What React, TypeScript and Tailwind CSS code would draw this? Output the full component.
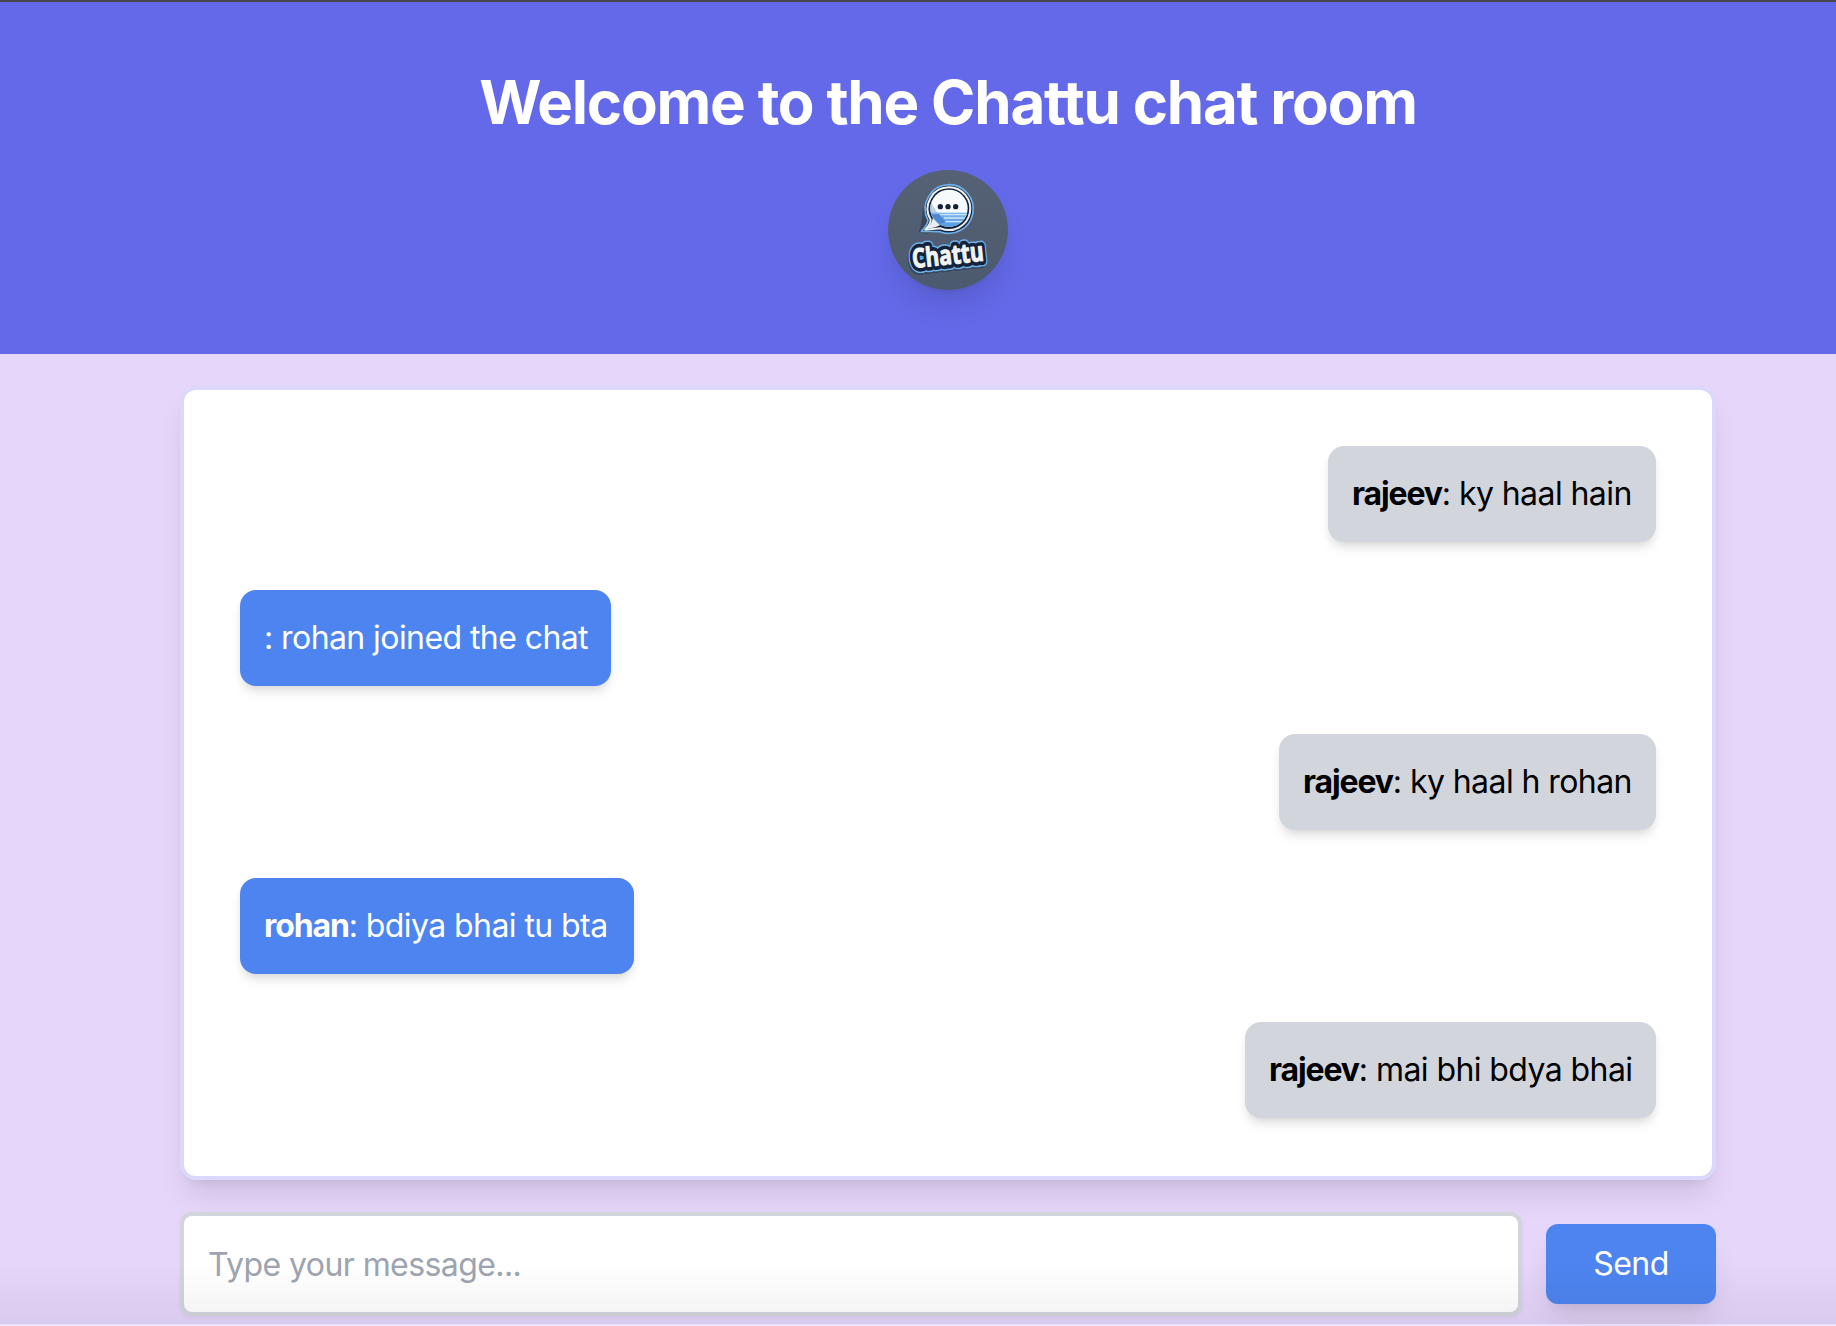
import React from "react";

type Message = { id: number; user: string; text: string; side: "left" | "right"; width: string };

const messages: Message[] = [
  { id: 1, user: "rajeev", text: "ky haal hain", side: "right", width: "w-[328px]" },
  { id: 2, user: "", text: "rohan joined the chat", side: "left", width: "w-[371px]" },
  { id: 3, user: "rajeev", text: "ky haal h rohan", side: "right", width: "w-[377px]" },
  { id: 4, user: "rohan", text: "bdiya bhai tu bta", side: "left", width: "w-[394px]" },
  { id: 5, user: "rajeev", text: "mai bhi bdya bhai", side: "right", width: "w-[411px]" },
];

function Logo() {
  const word = {
    x: 131,
    y: 343,
    fontSize: 80,
    fontWeight: 700,
    fontFamily: "Open Sans, Noto Sans, sans-serif",
    textLength: 216,
    lengthAdjust: "spacingAndGlyphs" as const,
    strokeLinejoin: "round" as const,
  };
  return (
    <svg viewBox="60 60 360 360" className="size-[120px] rounded-full shadow-[0_20px_30px_-6px_rgba(0,0,0,0.1),0_8px_12px_-8px_rgba(0,0,0,0.1)]">
      <defs>
        <linearGradient id="slate" x1="0" y1="0" x2="0" y2="1">
          <stop offset="0" stopColor="#566175" />
          <stop offset="1" stopColor="#4c5a6f" />
        </linearGradient>
        <linearGradient id="sea" x1="0" y1="0" x2="0" y2="1">
          <stop offset="0" stopColor="#7db7f0" />
          <stop offset="1" stopColor="#4f97e0" />
        </linearGradient>
        <clipPath id="disc">
          <circle cx="243" cy="175" r="56" />
        </clipPath>
      </defs>
      <rect x="60" y="60" width="360" height="360" fill="url(#slate)" />
      <path d="M165 170 Q162 225 152 245 Q175 255 200 246 L215 240 Z" fill="#38455b" />
      <g strokeLinejoin="round">
        <path d="M243 104 a73 73 0 1 1 -27 141 Q190 244 160 244 Q178 226 180 211 A73 73 0 0 1 243 104 Z" fill="#14233a" stroke="#6fb0e8" strokeWidth="5" />
        <path d="M243 112 a64 64 0 1 1 -25 123 Q195 238 172 239 Q188 222 188 209 A64 64 0 0 1 243 112 Z" fill="#14233a" stroke="#eef1f2" strokeWidth="6" />
      </g>
      <circle cx="243" cy="175" r="56" fill="#f7fafa" />
      <g clipPath="url(#disc)">
        <path d="M184 150 L218 205 L184 230 Z" fill="#b9cfea" />
        <rect x="188" y="188" width="115" height="48" fill="url(#sea)" />
        <path d="M216 194 H300 M228 204 H300 M232 215 H300" stroke="#cfe5fa" strokeWidth="4" />
        <path d="M188 193 H213 L233 217 L212 222 Z" fill="#4c88cf" />
      </g>
      <path d="M176 236 Q192 222 194 205 L216 226 Q200 235 176 236 Z" fill="#e8eef3" />
      <g fill="#14233a">
        <circle cx="217" cy="170" r="8" />
        <circle cx="240" cy="170" r="8" />
        <circle cx="263" cy="170" r="8" />
      </g>
      <g transform="rotate(-6 240 310)">
        <text {...word} x={127} y={349} fill="#38455b" stroke="#38455b" strokeWidth="32">Chattu</text>
        <text {...word} fill="#6fb0e8" stroke="#6fb0e8" strokeWidth="34">Chattu</text>
        <text {...word} fill="#14233a" stroke="#14233a" strokeWidth="25">Chattu</text>
        <text {...word} fill="#f2f4f4" stroke="#f2f4f4" strokeWidth="3">Chattu</text>
      </g>
    </svg>
  );
}

function Bubble({ message }: { message: Message }) {
  const right = message.side === "right";
  return (
    <div className={right ? "flex justify-end" : "flex justify-start"}>
      <div
        className={`${message.width} h-24 rounded-2xl px-6 py-6 text-[32px] leading-[48px] whitespace-nowrap shadow-[0_8px_12px_-2px_rgba(0,0,0,0.1),0_4px_8px_-4px_rgba(0,0,0,0.1)] ${
          right ? "bg-[#d2d5dc] text-black" : "bg-[#4d84ef] text-white"
        }`}
      >
        <strong className="font-bold tracking-[-0.035em]">{message.user}</strong>
        <span className="tracking-[-0.018em]">: {message.text}</span>
      </div>
    </div>
  );
}

export default function App() {
  return (
    <div className="relative h-[1326px] w-[1836px] overflow-hidden bg-[#e5d6fa] font-['Inter',sans-serif]">
      <div className="w-[1896px]">
        <header className="flex h-[354px] flex-col items-center border-t-2 border-[#48484a] bg-[#6369e8] pt-16">
          <h1 className="text-[60px] leading-[72px] font-bold tracking-[-0.02em] whitespace-nowrap text-white">
            Welcome to the Chattu chat room
          </h1>
          <div className="mt-8">
            <Logo />
          </div>
        </header>
        <main className="mx-auto w-[1536px] pt-8">
          <section className="flex h-[794px] flex-col gap-12 rounded-2xl border-4 border-[#dcd8fb] bg-white p-14 shadow-[0_20px_30px_-6px_rgba(0,0,0,0.1),0_8px_12px_-8px_rgba(0,0,0,0.1)]">
            {messages.map((m) => (
              <Bubble key={m.id} message={m} />
            ))}
          </section>
          <form className="mt-8 flex items-center gap-6" onSubmit={(e) => e.preventDefault()}>
            <input
              type="text"
              placeholder="Type your message..."
              className="h-[104px] w-[1342px] rounded-xl border-4 border-[#d2d5dc] bg-white px-6 text-[32px] tracking-[-0.018em] text-black shadow-[0_2px_4px_rgba(0,0,0,0.05)] outline-none placeholder:text-[#9ea4b0]"
            />
            <button className="h-20 w-[170px] rounded-xl bg-[#4d84ef] text-[32px] tracking-[-0.018em] text-white shadow-[0_20px_30px_-6px_rgba(0,0,0,0.1),0_8px_12px_-8px_rgba(0,0,0,0.1)]">
              Send
            </button>
          </form>
        </main>
      </div>
      <div className="pointer-events-none absolute inset-x-0 bottom-0 h-16 border-b-2 border-white/30 bg-linear-to-b from-black/0 to-black/5" />
    </div>
  );
}
